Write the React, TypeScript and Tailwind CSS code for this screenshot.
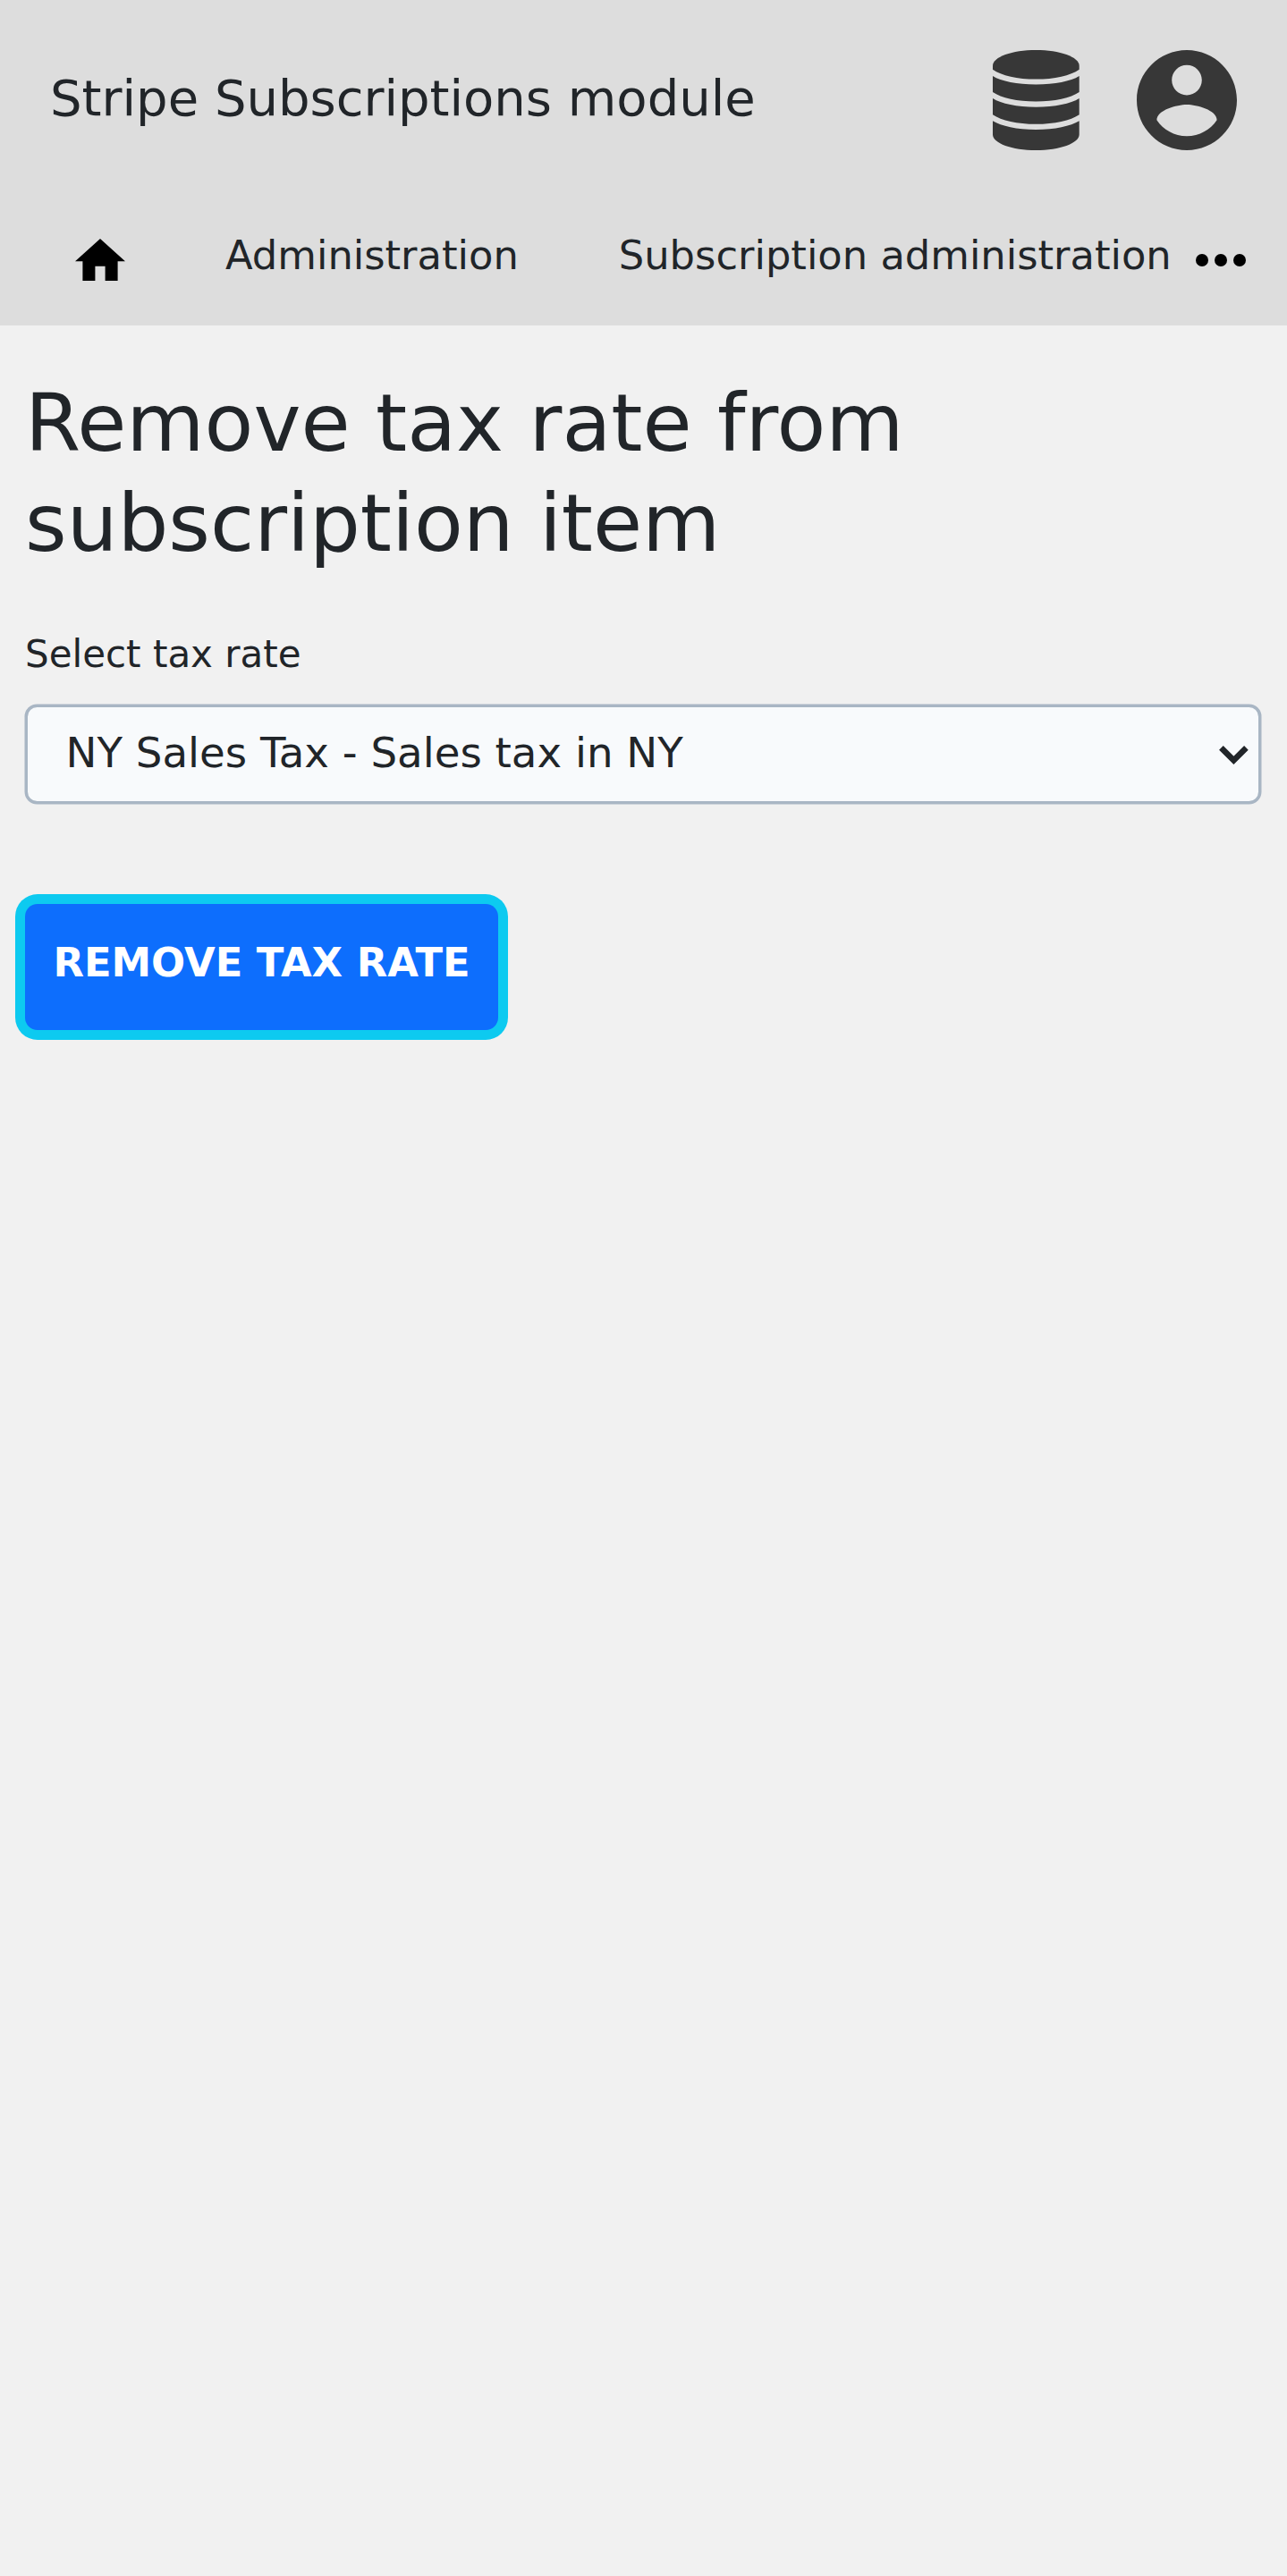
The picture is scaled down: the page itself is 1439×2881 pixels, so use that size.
const DatabaseIcon = () => (
  <svg width="98" height="112" viewBox="0 0 98 112" fill="#373737" aria-hidden="true">
    <path d="M48.3 0C75 0 96.7 7.8 96.7 17.4V21.7C87 28.5 69 32.6 48.3 32.6S9.6 28.5 0 21.7V17.4C0 7.8 21.6 0 48.3 0z" />
    <path d="M0 29C9.6 35 27 38.4 48.3 38.4S87 35 96.7 29V47C87 53.5 69 57.5 48.3 57.5S9.6 53.5 0 47z" />
    <path d="M0 54C9.6 60 27 63.7 48.3 63.7S87 60 96.7 54V72.2C87 78.7 69 82.8 48.3 82.8S9.6 78.7 0 72.2z" />
    <path d="M0 79.2C9.6 85 27 88.9 48.3 88.9S87 85 96.7 79.2V94.5C96.7 104.2 75 112 48.3 112S0 104.2 0 94.5z" />
  </svg>
);

const AccountIcon = () => (
  <svg width="112" height="112" viewBox="2 2 20 20" fill="#373737" aria-hidden="true">
    <path d="M12 2C6.48 2 2 6.48 2 12s4.48 10 10 10 10-4.48 10-10S17.52 2 12 2zm0 3c1.66 0 3 1.34 3 3s-1.34 3-3 3-3-1.34-3-3 1.34-3 3-3zm0 14.2c-2.5 0-4.71-1.28-6-3.22.03-1.99 4-3.08 6-3.08 1.99 0 5.97 1.09 6 3.08-1.29 1.94-3.5 3.22-6 3.22z" />
  </svg>
);

const HomeIcon = () => (
  <svg className="mt-[14.7px] h-[47.6px] w-[56px] shrink-0" viewBox="2 3 20 17" aria-hidden="true">
    <path d="M10 20v-6h4v6h5v-8h3L12 3 2 12h3v8z" />
  </svg>
);

const MoreIcon = () => (
  <svg className="h-[14px] w-[56px]" viewBox="0 0 56 14" aria-hidden="true">
    <circle cx="7" cy="7" r="7" />
    <circle cx="28" cy="7" r="7" />
    <circle cx="49" cy="7" r="7" />
  </svg>
);

export default function App() {
  return (
    <div className="min-h-[2881px] bg-[#f1f1f1] font-['DejaVu_Sans',sans-serif] text-[#212529]">
      <header className="flex h-[364px] w-[1438.5px] flex-col bg-[#dddddd] pt-[56px]">
        <div className="flex h-[112px] items-center justify-between px-[56px]">
          <div className="pb-[4px] text-[56px] leading-[84px] whitespace-nowrap">Stripe Subscriptions module</div>
          <div className="flex gap-[62.3px]">
            <DatabaseIcon />
            <AccountIcon />
          </div>
        </div>
        <nav className="mt-[84px] flex h-[67px] items-start pl-[84px] text-[44.8px] leading-[67px] whitespace-nowrap">
          <HomeIcon />
          <a className="ml-[112px]">Administration</a>
          <a className="ml-[112px]">Subscription administration</a>
          <span className="ml-[27.2px] flex pt-[31.6px]">
            <MoreIcon />
          </span>
        </nav>
      </header>
      <main className="flex flex-col items-start px-[28px] pt-[53px]">
        <h1 className="w-[1200px] text-[89.6px] leading-[112px]">Remove tax rate from subscription item</h1>
        <label className="mt-[59px] text-[42px] leading-[63px]">Select tax rate</label>
        <div className="mt-[25px] flex h-[111px] w-[1382px] items-center justify-between rounded-[13.5px] border-[3px] border-[#a9b6c4] bg-[#f8fafc] pr-[11px] pl-[42.5px] text-[46.7px] leading-[70px] shadow-[0_0_0_0.5px_#a9b6c4]">
          <span className="pb-[3px]">NY Sales Tax - Sales tax in NY</span>
          <svg className="mt-[3px] h-[22px] w-[33px]" viewBox="0 0 33 22" fill="none" stroke="#212529" strokeWidth="6.6" aria-hidden="true">
            <path d="M2.4 2.4l14 14 14-14" />
          </svg>
        </div>
        <button className="mt-[112px] flex h-[141px] w-[529px] justify-center rounded-[14px] bg-[#0d6efd] pt-[32px] text-[44.8px] leading-[67px] font-bold whitespace-nowrap text-white shadow-[0_0_0_11px_#0dcaf0]">
          REMOVE TAX RATE
        </button>
      </main>
    </div>
  );
}
